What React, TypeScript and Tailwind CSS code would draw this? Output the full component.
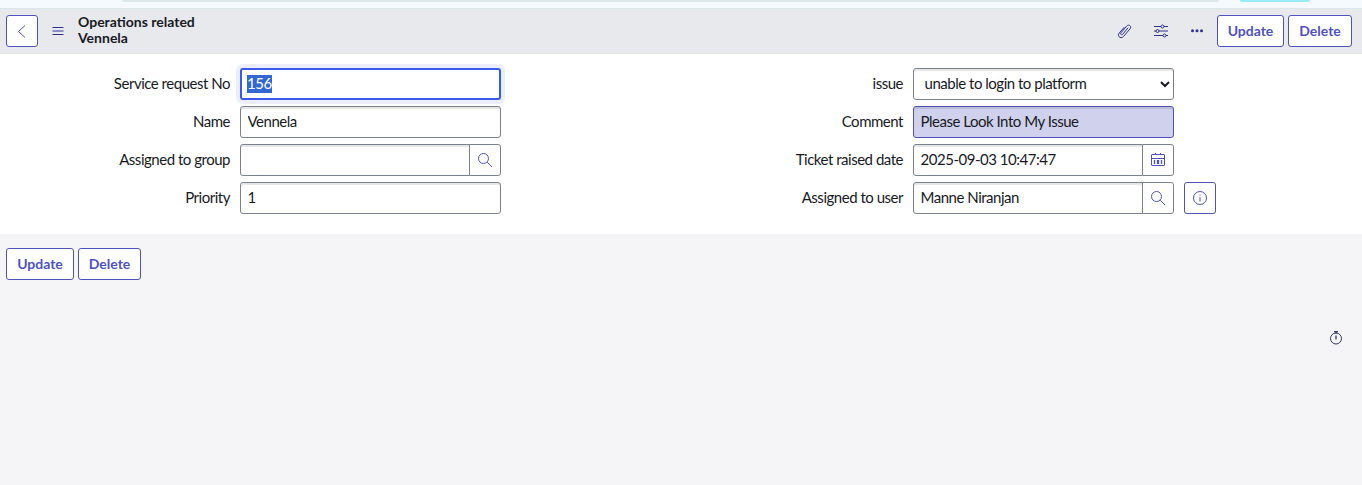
import type { ReactNode } from "react";

const control =
  "h-8 min-w-0 rounded-[3px] border border-[#7c828d] bg-white px-[6.5px] pb-[2px] text-[15px] tracking-[-0.48px] text-[#181a1f] shadow-[inset_0_2px_1px_rgba(0,0,0,0.1)] outline-none";

function Button({ children, className = "" }: { children: ReactNode; className?: string }) {
  return (
    <button
      className={`flex h-8 shrink-0 items-center justify-center rounded-[3px] border border-[#4f52bd] bg-white text-[14px] font-bold text-[#4f52bd] ${className}`}
    >
      {children}
    </button>
  );
}

function Field({ label, children }: { label: string; children: ReactNode }) {
  return (
    <div className="flex h-8 items-center">
      <label className="mr-[10px] w-[230px] shrink-0 pb-[2px] text-right text-[15px] leading-5 tracking-[-0.48px] whitespace-nowrap text-[#181a1f]">
        {label}
      </label>
      {children}
    </div>
  );
}

function Lookup({ value, label, icon }: { value: string; label: string; icon: ReactNode }) {
  return (
    <div className="flex w-[261px] shrink-0">
      <input className={`${control} w-[230px] rounded-r-none`} defaultValue={value} />
      <button
        aria-label={label}
        className="-ml-px flex h-8 w-8 items-center justify-center rounded-r-[3px] border border-[#7c828d] bg-white text-[#4f52bd]"
      >
        {icon}
      </button>
    </div>
  );
}

function SearchIcon() {
  return (
    <svg width="16" height="16" viewBox="0 0 16 16" fill="none" stroke="currentColor">
      <circle cx="6.5" cy="6.5" r="5" />
      <path d="M10.2 10.2 15 15" />
    </svg>
  );
}

function CalendarIcon() {
  return (
    <svg width="16" height="16" viewBox="0 0 16 16" fill="none" stroke="currentColor">
      <rect x="1.5" y="2.5" width="13" height="11" rx="0.5" />
      <path d="M1.5 6.5h13M5.5 1v2M10.5 1v2" />
      <path d="M4.5 8v4M7.5 8v4M8.5 8v4M11.5 8v4" strokeWidth="1.3" />
    </svg>
  );
}

export default function App() {
  return (
    <div className="h-[485px] w-full overflow-hidden bg-[#f5f5f8] font-['Lato',sans-serif] text-[14px] text-[#181a1f]">
      <div className="flex h-2 items-start bg-[#f4fafd]">
        <div className="ml-[122px] h-[2px] w-[1097px] rounded-b-full bg-[#dbe9ed]" />
        <div className="ml-[21px] h-[2px] w-[70px] rounded-b-full bg-[#99edfb]" />
      </div>

      <header className="flex h-[46px] items-center border-t border-b border-t-[#d9e6ea] border-b-[#e3e4e8] bg-[#e8e9ed] pr-[10px] pl-[6px]">
        <Button className="w-8">
          <svg width="16" height="16" viewBox="0 0 16 16" fill="none" stroke="currentColor" aria-label="Back">
            <path d="M11 2.5 4.5 8.5l6.5 6" />
          </svg>
        </Button>
        <svg className="ml-3 text-[#2e3192]" width="16" height="16" viewBox="0 0 16 16" stroke="currentColor" aria-label="Menu">
          <path d="M2.5 4.5h11M2.5 8h11M2.5 11.5h11" />
        </svg>
        <h1 className="ml-3 pb-[2px] text-[14px] leading-4 font-bold">
          Operations related
          <br />
          Vennela
        </h1>

        <div className="ml-auto flex items-center text-[#2e3192]">
          <svg width="16" height="16" viewBox="0 0 16 16" fill="none" stroke="currentColor" strokeLinecap="round" aria-label="Attachments">
            <path d="m10.8 5.1-5 6c-1.2 1.4-3 .1-1.8-1.3l5.7-6.7c2-2.4 5.4.2 3.4 2.7l-6.4 7.5c-2.7 3.2-7 0-4.5-3.2L7 4.5" />
          </svg>
          <svg className="ml-5" width="16" height="16" viewBox="0 0 16 16" fill="none" stroke="currentColor" aria-label="Personalize form">
            <path d="M1 3.5h7M11 3.5h4M1 8h2M6 8h9M1 12.5h9M13 12.5h2" />
            <circle cx="9.5" cy="3.5" r="1.5" />
            <circle cx="4.5" cy="8" r="1.5" />
            <circle cx="11.5" cy="12.5" r="1.5" />
          </svg>
          <svg className="mr-[12.5px] ml-5" width="16" height="16" viewBox="0 0 16 16" fill="currentColor" aria-label="More options">
            <circle cx="3.5" cy="7.7" r="1.5" />
            <circle cx="8" cy="7.7" r="1.5" />
            <circle cx="12.5" cy="7.7" r="1.5" />
          </svg>
          <Button className="w-[67px] pb-[2px]">Update</Button>
          <Button className="ml-1 w-16 pb-[2px]">Delete</Button>
        </div>
      </header>

      <main className="flex h-[180px] bg-white pt-[14px]">
        <section className="flex w-[673px] flex-col gap-[6px]">
          <Field label="Service request No">
            <div className="flex h-8 w-[261px] items-center rounded-[3px] border-2 border-[#3c59e7] bg-white px-[5px] shadow-[0_0_0_4px_#ebeefd]">
              <span className="bg-[#3367d1] pb-px text-[15px] leading-[17px] tracking-[-0.4px] text-white">156</span>
            </div>
          </Field>
          <Field label="Name">
            <input className={`${control} w-[261px]`} defaultValue="Vennela" />
          </Field>
          <Field label="Assigned to group">
            <Lookup value="" label="Look up group" icon={<SearchIcon />} />
          </Field>
          <Field label="Priority">
            <input className={`${control} w-[261px]`} defaultValue="1" />
          </Field>
        </section>

        <section className="flex flex-col gap-[6px]">
          <Field label="issue">
            <select className={`${control} w-[261px] pr-0`}>
              <option>unable to login to platform</option>
            </select>
          </Field>
          <Field label="Comment">
            <input
              className="h-8 w-[261px] rounded-[3px] border border-[#4f52bd] bg-[#d0d1ec] px-[6.5px] pb-[2px] text-[15px] tracking-[-0.48px] shadow-[inset_0_2px_1px_rgba(0,0,0,0.1)] outline-none"
              defaultValue="Please Look Into My Issue"
            />
          </Field>
          <Field label="Ticket raised date">
            <Lookup value="2025-09-03 10:47:47" label="Pick date" icon={<CalendarIcon />} />
          </Field>
          <Field label="Assigned to user">
            <Lookup value="Manne Niranjan" label="Look up user" icon={<SearchIcon />} />
            <Button className="ml-[10px] w-8">
              <svg width="16" height="16" viewBox="0 0 16 16" fill="none" stroke="currentColor" aria-label="Preview record">
                <circle cx="8" cy="8" r="6.5" />
                <path d="M8 7v4.5M8 4.5v1.2" />
              </svg>
            </Button>
          </Field>
        </section>
      </main>

      <div className="flex gap-1 pt-[14px] pl-[6px]">
        <Button className="w-[68px] pb-[2px]">Update</Button>
        <Button className="w-[63px] pb-[2px]">Delete</Button>
      </div>

      <div className="mt-[50px] flex justify-end pr-[18px]">
        <svg width="16" height="16" viewBox="0 0 16 16" fill="none" stroke="#30365f" aria-label="Response time">
          <circle cx="8" cy="8.5" r="5.5" />
          <path d="M6 1.7h4M8 1.5v2M8 5.5v4" strokeWidth="1.3" />
        </svg>
      </div>
    </div>
  );
}
